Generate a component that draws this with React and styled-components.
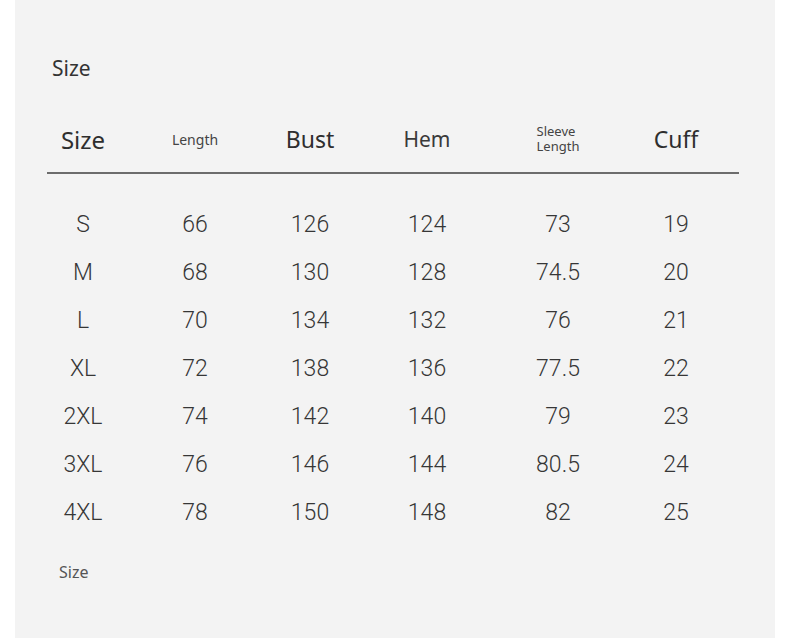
import React from 'react'
import styled, { createGlobalStyle } from 'styled-components'

const GlobalStyle = createGlobalStyle`
  html, body {
    margin: 0;
    padding: 0;
    background: #ffffff;
  }
`

const columns = [
  { label: 'Size', size: 24 },
  { label: 'Length', size: 14, tone: '#444' },
  { label: 'Bust', size: 23 },
  { label: 'Hem', size: 21, tone: '#3a3a3a' },
  { label: 'Sleeve Length', size: 13, narrow: true, tone: '#444' },
  { label: 'Cuff', size: 23 },
]

const rows = [
  ['S', '66', '126', '124', '73', '19'],
  ['M', '68', '130', '128', '74.5', '20'],
  ['L', '70', '134', '132', '76', '21'],
  ['XL', '72', '138', '136', '77.5', '22'],
  ['2XL', '74', '142', '140', '79', '23'],
  ['3XL', '76', '146', '144', '80.5', '24'],
  ['4XL', '78', '150', '148', '82', '25'],
]

const SizeChart = () => {
  return <Panel>
    <Title>Size</Title>
    <HeaderRow>
      {columns.map((c) => (
        <HeadCell key={c.label} $size={c.size} $narrow={c.narrow} $tone={c.tone}>
          {c.narrow ? <>Sleeve<br />Length</> : c.label}
        </HeadCell>
      ))}
    </HeaderRow>
    <Divider />
    <Body>
      {rows.map((r) => (
        <Row key={r[0]}>
          {r.map((v, idx) => <Cell key={idx}>{v}</Cell>)}
        </Row>
      ))}
    </Body>
    <Note>Size</Note>
  </Panel>
}

const Panel = styled.section`
  margin-left: 15px;
  width: 760px;
  min-height: 638px;
  background: #f3f3f3;
  box-sizing: border-box;
  padding-top: 54px;
  font-family: "Noto Sans", "Open Sans", sans-serif;
  color: #333;
`

const Title = styled.h2`
  margin: 0 0 0 37px;
  font-size: 21px;
  font-weight: 400;
  line-height: 28px;
  color: #333;
`

const grid = `
  display: grid;
  grid-template-columns: 112px 112px 118px 116px 146px 90px;
  margin-left: 12px;
  justify-items: center;
  align-items: center;
`

const HeaderRow = styled.div`
  ${grid}
  height: 64px;
  margin-top: 26px;
`

const HeadCell = styled.div`
  font-size: ${(p) => p.$size}px;
  line-height: ${(p) => (p.$narrow ? '15px' : '1.2')};
  text-align: left;
  color: ${(p) => p.$tone || '#2e2e2e'};
  ${(p) => p.$narrow && 'transform: translate(0, -1px);'}
`

const Divider = styled.div`
  height: 2px;
  margin: 0 36px 0 32px;
  background: #6c6c6c;
`

const Body = styled.div`
  padding-top: 26px;
`

const Row = styled.div`
  ${grid}
  height: 48px;
`

const Cell = styled.div`
  font-family: Roboto, "Liberation Sans", sans-serif;
  font-weight: 300;
  font-size: 23px;
  color: #363636;
`

const Note = styled.p`
  margin: 25px 0 0 44px;
  font-size: 16px;
  line-height: 22px;
  color: #555;
`

export default function App() {
  return <>
    <GlobalStyle />
    <SizeChart />
  </>
}
